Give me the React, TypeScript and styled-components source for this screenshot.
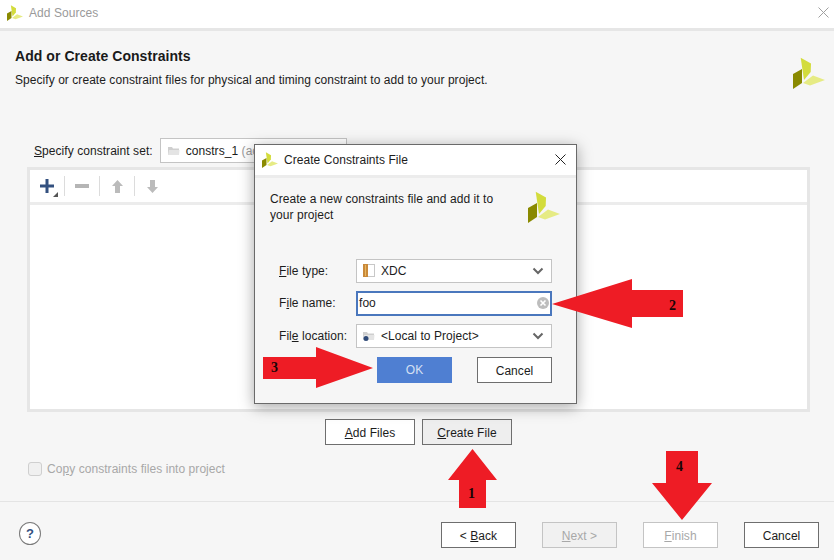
import styled, { createGlobalStyle } from "styled-components";

const GlobalStyle = createGlobalStyle`
  html, body {
    margin: 0;
    padding: 0;
    background: #f6f6f6;
  }
  * {
    box-sizing: border-box;
  }
`;

const Window = styled.div`
  position: relative;
  display: flex;
  flex-direction: column;
  width: 834px;
  height: 560px;
  overflow: hidden;
  background: #f6f6f6;
  color: #1c1c1c;
  font-family: "Liberation Sans", Arial, sans-serif;
  font-size: 12px;
  letter-spacing: 0.055px;
`;

const TitleBar = styled.div<{ $active?: boolean }>`
  flex: none;
  display: flex;
  align-items: center;
  gap: 6px;
  height: ${(p) => (p.$active ? "33px" : "31px")};
  padding: 0 ${(p) => (p.$active ? "10px" : "5px")} ${(p) => (p.$active ? "1px" : "3px")} 7px;
  background: #fff;
  border-bottom: 3px solid ${(p) => (p.$active ? "#ececec" : "#e6e6e6")};
  color: ${(p) => (p.$active ? "#1c1c1c" : "#9a9a9a")};
  font-size: 12px;
`;

const TitleText = styled.span`
  flex: 1;
`;

const Header = styled.div`
  flex: none;
  display: flex;
  justify-content: space-between;
  height: 107px;
  padding: 17px 9px 0 15px;
`;

const Heading = styled.h1`
  margin: 0 0 9px;
  font-size: 14px;
  line-height: 16px;
  font-weight: 700;
  color: #1a1a1a;
`;

const Subtitle = styled.p`
  margin: 0;
  line-height: 15px;
`;

const HeaderLogo = styled.div`
  padding-top: 9px;
`;

const SetRow = styled.div`
  flex: none;
  display: flex;
  align-items: center;
  gap: 7px;
  height: 25px;
  margin-left: 34px;
  margin-bottom: 4px;
`;

const SetSelect = styled.div`
  display: flex;
  align-items: center;
  gap: 6px;
  width: 187px;
  height: 25px;
  padding-left: 7px;
  background: #fff;
  border: 1px solid #c4c4c4;
`;

const Muted = styled.span`
  color: #999;
`;

const Panel = styled.div`
  flex: none;
  display: flex;
  flex-direction: column;
  height: 245px;
  margin: 0 24px 0 27px;
  background: #fff;
  border: 3px solid #e6e6e6;
`;

const Toolbar = styled.div`
  flex: none;
  display: flex;
  align-items: center;
  gap: 6px;
  height: 35px;
  padding-left: 6px;
  border-bottom: 3px solid #ececec;
`;

const ToolSeparator = styled.div`
  width: 1px;
  height: 20px;
  background: #dcdcdc;
`;

const ToolIcon = styled.div`
  display: flex;
  align-items: center;
  justify-content: center;
  width: 22px;
  height: 22px;
`;

const AddActions = styled.div`
  flex: none;
  display: flex;
  justify-content: center;
  gap: 7px;
  height: 26px;
  margin-top: 7px;
  padding-left: 3px;
`;

const Button = styled.button<{ $width?: number; $tone?: "hover" | "disabled" | "ghost" }>`
  width: ${(p) => p.$width ?? 75}px;
  height: 26px;
  padding: 1px 0 0;
  font-family: inherit;
  font-size: 12px;
  letter-spacing: inherit;
  color: ${(p) => (p.$tone === "disabled" || p.$tone === "ghost" ? "#a8a8a8" : "#1c1c1c")};
  background: ${(p) =>
    p.$tone === "hover" ? "#eeeeee" : p.$tone === "disabled" ? "#f1f1f1" : "#fff"};
  border: 1px solid
    ${(p) => (p.$tone === "disabled" || p.$tone === "ghost" ? "#c4c4c4" : "#6e6e6e")};
`;

const PrimaryButton = styled.button`
  width: 75px;
  height: 26px;
  padding: 0;
  font-family: inherit;
  font-size: 12px;
  color: #d5e0f3;
  background: #4f7fd2;
  border: none;
`;

const CheckRow = styled.label`
  flex: none;
  display: flex;
  align-items: center;
  gap: 5px;
  height: 15px;
  margin: 16px 0 0 28px;
  color: #a8a8a8;
`;

const CheckBox = styled.span`
  width: 14px;
  height: 14px;
  background: #f0f0f0;
  border: 1px solid #cfcfcf;
  border-radius: 3px;
`;

const Footer = styled.div`
  flex: none;
  display: flex;
  align-items: flex-start;
  height: 59px;
  margin-top: 25px;
  padding: 20px 15px 0 19px;
  border-top: 1px solid #e4e4e4;
`;

const FooterActions = styled.div`
  display: flex;
  gap: 26px;
  margin-left: auto;
`;

const Help = styled.div`
  display: flex;
  align-items: center;
  justify-content: center;
  width: 22px;
  height: 23px;
  background: #fff;
  border: 1px solid #7a7a7a;
  border-radius: 50%;
  color: #33507f;
  font-size: 13px;
  font-weight: 700;
`;

const Dialog = styled.div`
  position: absolute;
  left: 254px;
  top: 144px;
  display: flex;
  flex-direction: column;
  width: 323px;
  height: 260px;
  background: #f6f6f6;
  border: 1px solid #6a6a6a;
  box-shadow: 0 3px 14px rgba(0, 0, 0, 0.35);
`;

const DialogIntro = styled.div`
  flex: none;
  display: flex;
  justify-content: space-between;
  height: 80px;
  padding: 13px 16px 0 15px;
`;

const IntroText = styled.p`
  width: 240px;
  margin: 0;
  line-height: 16px;
`;

const FormGrid = styled.div`
  display: grid;
  grid-template-columns: 77px 196px;
  grid-auto-rows: 25px;
  row-gap: 7.5px;
  align-items: center;
  margin-left: 24px;
`;

const FieldBox = styled.div<{ $focus?: boolean }>`
  display: flex;
  align-items: center;
  gap: 6px;
  height: ${(p) => (p.$focus ? 25 : 24)}px;
  padding: 0 ${(p) => (p.$focus ? "1px" : "7px")} 0 ${(p) => (p.$focus ? "1px" : "6px")};
  background: #fff;
  border: ${(p) => (p.$focus ? "2px solid #4a77bd" : "1px solid #c4c4c4")};
`;

const FieldValue = styled.span`
  flex: 1;
`;

const DialogActions = styled.div`
  display: flex;
  justify-content: flex-end;
  gap: 25px;
  margin: 9px 24px 0 0;
`;

const Annotation = styled.div<{ $x: number; $y: number }>`
  position: absolute;
  left: ${(p) => p.$x}px;
  top: ${(p) => p.$y}px;
  line-height: 0;
`;

const Step = styled.span<{ $x: number; $y: number }>`
  position: absolute;
  left: ${(p) => p.$x}px;
  top: ${(p) => p.$y}px;
  font-family: "Liberation Serif", serif;
  font-size: 14px;
  line-height: 14px;
  font-weight: 700;
  color: #1a0505;
`;

function Logo({ size }: { size: number }) {
  return (
    <svg width={size} height={size} viewBox="0 0 32 32">
      <polygon points="7.700,0.700 18,6.500 17.700,15 11,23" fill="#d3dc3c" />
      <polygon points="0,17 9,12 9,26 0,32" fill="#8a8a00" />
      <polygon points="10,26 20,18.500 32,23 17,28.500" fill="#e6eb84" />
    </svg>
  );
}

function Chevron() {
  return (
    <svg width="12" height="8" viewBox="0 0 12 8">
      <path d="M1.500 1.500 6 6l4.500-4.500" fill="none" stroke="#666" strokeWidth="2" />
    </svg>
  );
}

function FolderIcon({ dot }: { dot?: boolean }) {
  return (
    <svg width="12" height="11" viewBox="0 0 12 11">
      <path d="M0 2h4l1 1.500h6V10H0z" fill="#cfcfcf" />
      <path d="M1 5h10.500L11 10H0z" fill="#e4e4e4" />
      {dot && <circle cx="3" cy="8.500" r="2.500" fill="#2f4a78" />}
    </svg>
  );
}

function XdcIcon() {
  return (
    <svg width="12" height="13" viewBox="0 0 12 13">
      <rect x="0.500" y="0.500" width="11" height="12" fill="#fff" stroke="#c8c8c8" />
      <rect x="0" y="0" width="5" height="13" fill="#c9893a" />
      <rect x="2" y="1" width="1" height="11" fill="#e8b860" />
    </svg>
  );
}

function CloseIcon({ color }: { color: string }) {
  return (
    <svg width="11" height="11" viewBox="0 0 11 11">
      <path d="M0.500 0.500l10 10M10.500 0.500l-10 10" stroke={color} strokeWidth="1" />
    </svg>
  );
}

function ClearIcon() {
  return (
    <svg width="12" height="12" viewBox="0 0 12 12">
      <circle cx="6" cy="6" r="6" fill="#bdbdbd" />
      <path d="M3.500 3.500l5 5M8.500 3.500l-5 5" stroke="#fff" strokeWidth="1.600" />
    </svg>
  );
}

function Arrow({ x, y, w, h, points, step, sx, sy }: {
  x: number; y: number; w: number; h: number; points: string; step: string; sx: number; sy: number;
}) {
  return (
    <Annotation $x={x} $y={y}>
      <svg width={w} height={h} viewBox={`0 0 ${w} ${h}`}>
        <polygon points={points} fill="#ee1c25" />
      </svg>
      <Step $x={sx} $y={sy}>{step}</Step>
    </Annotation>
  );
}

export default function App() {
  return (
    <Window>
      <GlobalStyle />
      <TitleBar>
        <Logo size={16} />
        <TitleText>Add Sources</TitleText>
        <CloseIcon color="#a0a0a0" />
      </TitleBar>

      <Header>
        <div>
          <Heading>Add or Create Constraints</Heading>
          <Subtitle>Specify or create constraint files for physical and timing constraint to add to your project.</Subtitle>
        </div>
        <HeaderLogo>
          <Logo size={32} />
        </HeaderLogo>
      </Header>

      <SetRow>
        <span><u>S</u>pecify constraint set:</span>
        <SetSelect>
          <FolderIcon />
          <span>constrs_1 <Muted>(active)</Muted></span>
        </SetSelect>
      </SetRow>

      <Panel>
        <Toolbar>
          <ToolIcon>
            <svg width="22" height="22" viewBox="0 0 22 22">
              <path d="M9.500 4h3v5.500H18v3h-5.500V18h-3v-5.500H4v-3h5.500z" fill="#33507f" />
              <path d="M22 17v5h-5z" fill="#555" />
            </svg>
          </ToolIcon>
          <ToolSeparator />
          <ToolIcon>
            <svg width="14" height="4" viewBox="0 0 14 4">
              <rect width="14" height="4" fill="#b5b5b5" />
            </svg>
          </ToolIcon>
          <ToolSeparator />
          <ToolIcon>
            <svg width="11" height="13" viewBox="0 0 11 13">
              <path d="M5.500 0l5.500 6H8v7H3V6H0z" fill="#bbb" />
            </svg>
          </ToolIcon>
          <ToolSeparator />
          <ToolIcon>
            <svg width="11" height="13" viewBox="0 0 11 13">
              <path d="M5.500 13l5.500-6H8V0H3v7H0z" fill="#bbb" />
            </svg>
          </ToolIcon>
        </Toolbar>
      </Panel>

      <AddActions>
        <Button $width={90}><u>A</u>dd Files</Button>
        <Button $width={90} $tone="hover"><u>C</u>reate File</Button>
      </AddActions>

      <CheckRow>
        <CheckBox />
        <span>Co<u>p</u>y constraints files into project</span>
      </CheckRow>

      <Footer>
        <Help>?</Help>
        <FooterActions>
          <Button>&lt; <u>B</u>ack</Button>
          <Button $tone="disabled"><u>N</u>ext &gt;</Button>
          <Button $tone="ghost"><u>F</u>inish</Button>
          <Button>Cancel</Button>
        </FooterActions>
      </Footer>

      <Dialog>
        <TitleBar $active>
          <Logo size={16} />
          <TitleText>Create Constraints File</TitleText>
          <CloseIcon color="#222" />
        </TitleBar>
        <DialogIntro>
          <IntroText>Create a new constraints file and add it to your project</IntroText>
          <Logo size={32} />
        </DialogIntro>
        <FormGrid>
          <span><u>F</u>ile type:</span>
          <FieldBox>
            <XdcIcon />
            <FieldValue>XDC</FieldValue>
            <Chevron />
          </FieldBox>
          <span>F<u>i</u>le name:</span>
          <FieldBox $focus>
            <FieldValue>foo</FieldValue>
            <ClearIcon />
          </FieldBox>
          <span>Fil<u>e</u> location:</span>
          <FieldBox>
            <FolderIcon dot />
            <FieldValue>&lt;Local to Project&gt;</FieldValue>
            <Chevron />
          </FieldBox>
        </FormGrid>
        <DialogActions>
          <PrimaryButton>OK</PrimaryButton>
          <Button>Cancel</Button>
        </DialogActions>
      </Dialog>

      <Arrow x={448} y={449} w={49} h={59} points="24.500,0 49,31 38,31 38,59 11,59 11,31 0,31" step="1" sx={20} sy={38} />
      <Arrow x={552} y={279} w={131} h={49} points="0,25 80,0 80,11 131,11 131,38 80,38 80,49" step="2" sx={117} sy={20} />
      <Arrow x={263} y={347} w={110} h={41} points="0,10 53,10 53,0 110,21 53,41 53,32 0,32" step="3" sx={8} sy={14} />
      <Arrow x={652} y={451} w={60} h={69} points="14,0 46,0 46,32 60,32 30,69 0,32 14,32" step="4" sx={24} sy={9} />
    </Window>
  );
}
